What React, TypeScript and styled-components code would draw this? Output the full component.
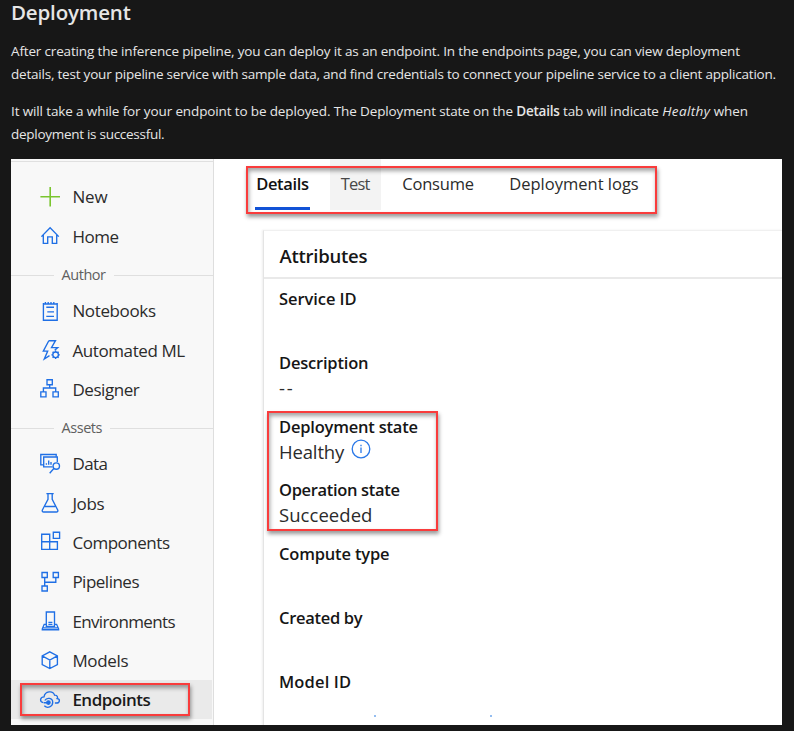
import React from 'react';
import styled, { createGlobalStyle, css } from 'styled-components';

const GlobalStyle = createGlobalStyle`
  * { box-sizing: border-box; }
  body {
    margin: 0;
    background: #171717;
    font-family: 'Open Sans', 'Noto Sans', sans-serif;
  }
`;

const Page = styled.main`
  width: 794px;
  height: 731px;
  overflow: hidden;
  padding: 0 12px 0 11px;
  color: #e6e6e6;
`;

const Heading = styled.h2`
  margin: 0;
  height: 40px;
  font-size: 20.5px;
  line-height: 24px;
  font-weight: 600;
  letter-spacing: -0.17px;
`;

const Paragraph = styled.p`
  margin: 0 0 14px;
  font-size: 13.5px;
  line-height: 23px;
`;

const Line = styled.span<{ $spacing: number }>`
  display: block;
  white-space: pre;
  letter-spacing: ${(p) => p.$spacing}px;
`;

const Em = styled.em`
  letter-spacing: 0.4px;
`;

const Strong = styled.strong`
  font-weight: 600;
  letter-spacing: -0.22px;
`;

const Studio = styled.section`
  display: grid;
  grid-template-columns: 203px 1fr;
  width: 771px;
  height: 566px;
  margin-top: -1px;
  overflow: hidden;
  background: #fff;
  color: #2b2b2b;
`;

const Sidebar = styled.nav`
  background: #f8f8f8;
  border-right: 1px solid #dedede;
  padding-top: 2px;
`;

const SidebarTop = styled.div`
  height: 16.3px;
  border-top: 1px solid #e0e0e0;
`;

const NavItem = styled.a<{ $active?: boolean }>`
  position: relative;
  display: flex;
  align-items: center;
  gap: 12.4px;
  height: 39.35px;
  padding-left: 29px;
  margin-right: 1px;
  font-size: 17px;
  ${(p) =>
    p.$active &&
    css`
      background: #eaeaea;
      color: #1a1a1a;
      font-weight: 600;
    `}
`;

const NavLabel = styled.span<{ $spacing: number }>`
  letter-spacing: ${(p) => p.$spacing}px;
  white-space: nowrap;
`;

const NavIcon = styled.svg<{ $tone?: string }>`
  width: 20px;
  height: 20px;
  flex: none;
  fill: none;
  stroke: ${(p) => p.$tone ?? '#1f6fe5'};
  stroke-width: 1.35;
  overflow: visible;
`;

const GroupTitle = styled.div`
  display: flex;
  align-items: center;
  height: 35px;
  padding-top: 2px;
  color: #5f5f5f;
  font-size: 14.5px;
  letter-spacing: -0.45px;

  &::before,
  &::after {
    content: '';
    height: 1px;
    background: #dfdfdf;
    margin-top: 2px;
  }
  &::before { width: 43px; margin-right: 7.5px; }
  &::after { flex: 1; margin-left: 8px; }
`;

const Callout = styled.span<{ $inset: string }>`
  position: absolute;
  inset: ${(p) => p.$inset};
  border: 2px solid #f93c3c;
  box-shadow: 1px 3px 4px rgba(0, 0, 0, 0.4), inset 1px 3px 4px rgba(0, 0, 0, 0.36);
  pointer-events: none;
`;

const Content = styled.div`
  min-width: 0;
  padding-left: 41px;
`;

const Tabs = styled.div`
  position: relative;
  display: flex;
  height: 51px;
`;

const Tab = styled.div<{ $width: number; $gap: number; $spacing: number; $state?: 'selected' | 'hover' }>`
  width: ${(p) => p.$width}px;
  margin-right: ${(p) => p.$gap}px;
  height: 51px;
  padding-top: 12.5px;
  text-align: center;
  white-space: nowrap;
  font-size: 16.5px;
  line-height: 24px;
  letter-spacing: ${(p) => p.$spacing}px;
  ${(p) =>
    p.$state === 'selected' &&
    css`
      color: #111;
      font-weight: 600;
      border-bottom: 3px solid #1152d6;
    `}
  ${(p) =>
    p.$state === 'hover' &&
    css`
      color: #484848;
      background: #f3f3f3;
    `}
`;

const Card = styled.section`
  margin: 20px 0 0 8px;
  height: 510px;
  border-left: 1px solid #e4e4e4;
  border-top: 1px solid #f0f0f0;
  box-shadow: -1px 0 2px rgba(0, 0, 0, 0.07);
`;

const CardTitle = styled.h3`
  margin: 0;
  height: 48px;
  padding-left: 15.5px;
  border-bottom: 2px solid #e9e9e9;
  color: #161616;
  font-size: 18.5px;
  line-height: 50px;
  font-weight: 600;
  letter-spacing: -0.25px;
`;

const Fields = styled.dl`
  margin: 0;
  padding: 7px 0 0 15px;
`;

const Field = styled.div`
  height: 63.8px;
`;

const StateGroup = styled.div`
  position: relative;
`;

const Term = styled.dt<{ $spacing: number }>`
  color: #161616;
  font-size: 16.5px;
  line-height: 25px;
  font-weight: 600;
  letter-spacing: ${(p) => p.$spacing}px;
`;

const Value = styled.dd<{ $spacing?: number }>`
  display: flex;
  margin: 0;
  height: 25px;
  font-size: 18.5px;
  line-height: 25px;
  letter-spacing: ${(p) => p.$spacing ?? 0}px;
`;

const InfoIcon = styled.svg`
  width: 20px;
  height: 20px;
  margin-left: 6.5px;
  fill: none;
  stroke: #2a78e8;
  stroke-width: 1.3;
`;

const LinkMarks = styled.dd`
  display: flex;
  gap: 114px;
  margin: 21px 0 0 94.5px;
`;

const Mark = styled.i`
  width: 2px;
  height: 2px;
  background: #94bdf0;
`;

const icons: Record<string, React.ReactNode> = {
  New: <path d="M10.2 0V19.6M.4 9.8H20" strokeWidth="1.6" />,
  Home: <path d="M1.4 10.6 10.1 1.7l8.7 8.9M3.3 9v8.4h4.4v-6.6h4.6v6.6h4.4V9" />,
  Notebooks: (
    <>
      <path d="M3.4 2v17.2h13.8V2M3.4 3h13.8M5.4 1v2M8.2 1v2M11 1v2M13.8 1v2" />
      <path d="M6.3 6.2H14M7.3 10.8H14M6.3 15.4H14" />
    </>
  ),
  'Automated ML': (
    <>
      <path d="M8.8.7h6.7l-4 6.9h6.2l-3 2.6M8.8.7 3.3 11.1h4.4L4.3 19l5.2-3.4" />
      <circle cx="15.6" cy="14.8" r="2.8" />
      <path
        d="M15.6 10.6V12M15.6 17.6V19M11.4 14.8h1.4M18.4 14.8h1.4M12.6 11.8l1 1M17.6 16.8l1 1M12.6 17.8l1-1M17.6 12.8l1-1"
      />
    </>
  ),
  Designer: (
    <path d="M7 .7h5.3v5H7zM.8 12.8H6v5H.8zM13 12.8h5.3v5H13zM9.7 5.7V9M3.4 12.8V9h12.3v3.8" />
  ),
  Data: (
    <>
      <path d="M3.6 10.8H.8V.5h15.4v2.3" />
      <path d="M12.6 12.8H3.7V3h13.6v5" />
      <path d="M6.4 10.7V9.2M8.7 10.7V6.6M11 10.7V8" />
      <circle cx="16.3" cy="12" r="3.2" />
      <path d="M14 14.3 9.7 19.2" />
    </>
  ),
  Jobs: (
    <path d="M6.4.6h7.3M8 .6v5.8L2.4 16.9q-.7 2.1 1.3 2.1h12.7q2 0 1.3-2.1L12.2 6.4V.6M5 13.5h10.2" />
  ),
  Components: <path d="M1.7 2.2h8v15.2h-8zM1.7 9.7h15.7v7.7H9.7M13.3.2h6.3v6.2h-6.3z" />,
  Pipelines: (
    <path d="M2 .5h5.3v5H2zM13.2.5h5.2v5h-5.2zM2 14h5.3v5H2zM4.7 5.5V14M15.8 5.5v4.7H4.7" />
  ),
  Environments: (
    <>
      <path d="M6.3 15.3V1h8.2v14.3zM8.4 11.4h4M8.4 13.3h4" />
      <path d="M6.3 13.3H4.2l-1.9 4.5v.9h16.3v-.9l-2-4.5h-2.1M2.3 16.8h16.3" />
    </>
  ),
  Models: <path d="m9.8 1.8 7.6 4v8.7l-7.6 4-7.6-4V5.8zM2.2 5.8l7.6 4.2 7.6-4.2M9.8 10v8.500" />,
  Endpoints: (
    <>
      <path d="M3.400 12.700C-.6 12-.3 7.100 4 6.900 5 .900 13 .200 14.600 5.200c3.200-.2 3.200 2.700 2.600 3.300 3.400.7 2.600 4.500-.8 4.500h-1.500" />
      <path d="M4.300 15.800c3.300 3.100 8.400 1 8.400-3.500 0-4.500-6-5.200-7.900-1.800M3.800 12.700h4.600" />
      <circle cx="8.400" cy="12.500" r="1.700" fill="#1f6fe5" />
    </>
  ),
};

interface NavEntry {
  label: string;
  spacing: number;
}

const general: NavEntry[] = [
  { label: 'New', spacing: -0.17 },
  { label: 'Home', spacing: -0.5 },
];
const author: NavEntry[] = [
  { label: 'Notebooks', spacing: -0.36 },
  { label: 'Automated ML', spacing: -0.4 },
  { label: 'Designer', spacing: -0.43 },
];
const assets: NavEntry[] = [
  { label: 'Data', spacing: -0.6 },
  { label: 'Jobs', spacing: -0.4 },
  { label: 'Components', spacing: -0.47 },
  { label: 'Pipelines', spacing: -0.5 },
  { label: 'Environments', spacing: -0.64 },
  { label: 'Models', spacing: -0.35 },
  { label: 'Endpoints', spacing: -0.51 },
];

function NavList({ entries }: { entries: NavEntry[] }) {
  return (
    <>
      {entries.map(({ label, spacing }) => {
        const active = label === 'Endpoints';
        return (
          <NavItem key={label} $active={active}>
            <NavIcon viewBox="0 0 20 20" $tone={label === 'New' ? '#7ac52f' : undefined}>
              {icons[label]}
            </NavIcon>
            <NavLabel $spacing={spacing}>{label}</NavLabel>
            {active && <Callout $inset="3px 22px 3px 9px" />}
          </NavItem>
        );
      })}
    </>
  );
}

export default function App() {
  return (
    <>
      <GlobalStyle />
      <Page>
        <Heading>Deployment</Heading>
        <Paragraph>
          <Line $spacing={-0.16}>
            After creating the inference pipeline, you can deploy it as an endpoint. In the endpoints page, you can view deployment
          </Line>
          <Line $spacing={-0.21}>
            details, test your pipeline service with sample data, and find credentials to connect your pipeline service to a client application.
          </Line>
        </Paragraph>
        <Paragraph>
          <Line $spacing={-0.13}>
            It will take a while for your endpoint to be deployed. The Deployment state on the <Strong>Details</Strong> tab will
            indicate <Em>Healthy</Em> when
          </Line>
          <Line $spacing={-0.28}>deployment is successful.</Line>
        </Paragraph>
        <Studio>
          <Sidebar>
            <SidebarTop />
            <NavList entries={general} />
            <GroupTitle>Author</GroupTitle>
            <NavList entries={author} />
            <GroupTitle>Assets</GroupTitle>
            <NavList entries={assets} />
          </Sidebar>
          <Content>
            <Tabs>
              <Tab $width={55} $gap={19.5} $spacing={-0.32} $state="selected">Details</Tab>
              <Tab $width={51.5} $gap={21} $spacing={-0.8} $state="hover">Test</Tab>
              <Tab $width={72} $gap={35} $spacing={-0.2}>Consume</Tab>
              <Tab $width={130} $gap={0} $spacing={0}>Deployment logs</Tab>
              <Callout $inset="7px 125.5px -4px -9px" />
            </Tabs>
            <Card>
              <CardTitle>Attributes</CardTitle>
              <Fields>
                <Field>
                  <Term $spacing={-0.07}>Service ID</Term>
                </Field>
                <Field>
                  <Term $spacing={-0.2}>Description</Term>
                  <Value $spacing={1.8}>--</Value>
                </Field>
                <StateGroup>
                  <Field>
                    <Term $spacing={-0.2}>Deployment state</Term>
                    <Value $spacing={-0.15}>
                      Healthy
                      <InfoIcon viewBox="0 0 20 20">
                        <circle cx="10" cy="10" r="8.800" />
                        <path d="M10 8.500v5.500M10 5.700v1.500" />
                      </InfoIcon>
                    </Value>
                  </Field>
                  <Field>
                    <Term $spacing={-0.33}>Operation state</Term>
                    <Value $spacing={0.05}>Succeeded</Value>
                  </Field>
                  <Callout $inset="-2.500px 344px 10px -12.500px" />
                </StateGroup>
                <Field>
                  <Term $spacing={-0.18}>Compute type</Term>
                </Field>
                <Field>
                  <Term $spacing={-0.3}>Created by</Term>
                </Field>
                <Field>
                  <Term $spacing={0.15}>Model ID</Term>
                  <LinkMarks>
                    <Mark />
                    <Mark />
                  </LinkMarks>
                </Field>
              </Fields>
            </Card>
          </Content>
        </Studio>
      </Page>
    </>
  );
}
